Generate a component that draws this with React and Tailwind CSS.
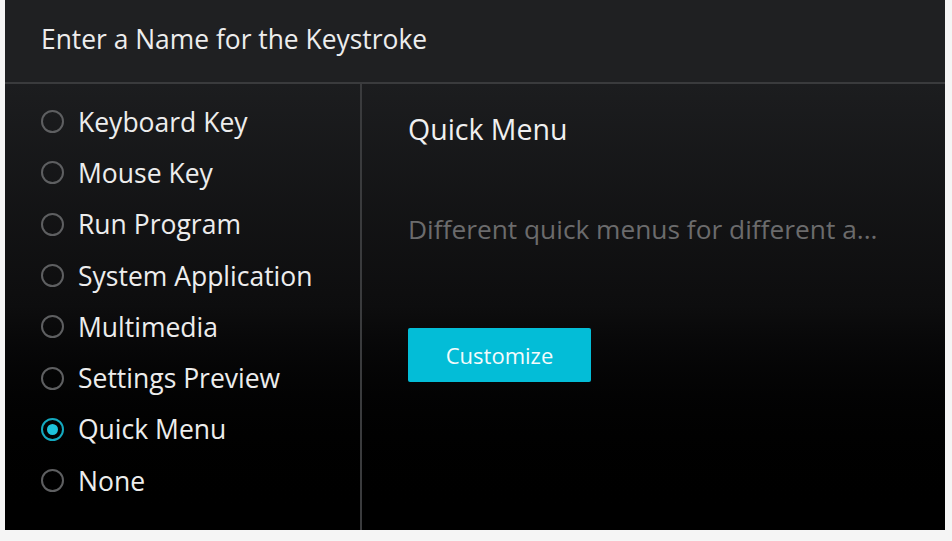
const options = [
  "Keyboard Key",
  "Mouse Key",
  "Run Program",
  "System Application",
  "Multimedia",
  "Settings Preview",
  "Quick Menu",
  "None",
];

function Radio({ checked }) {
  if (checked) {
    return (
      <span className="flex h-[23px] w-[23px] items-center justify-center rounded-full border-2 border-[#14a9bf]">
        <span className="h-[11px] w-[11px] rounded-full bg-[#1ec3dc]" />
      </span>
    );
  }
  return <span className="h-[23px] w-[23px] rounded-full border-2 border-[#5e5f61]" />;
}

export default function App() {
  return (
    <div
      className="flex h-[541px] w-[952px] bg-[#f5f5f5] pl-[5px] pr-[7px] pb-[11px]"
      style={{ fontFamily: '"Open Sans", "Noto Sans", sans-serif' }}
    >
      <div className="flex flex-1 flex-col">
        {/* header */}
        <div className="flex h-[84px] items-center border-b-2 border-[#3a3b3d] bg-[#1f2022] pb-[2px] pl-[36px]">
          <span className="text-[26.4px] text-[#ededed]">Enter a Name for the Keystroke</span>
        </div>

        {/* body */}
        <div className="flex flex-1 bg-gradient-to-b from-[#1c1d1f] via-[#0d0d0e] to-black">
          <div className="flex w-[357px] flex-col border-r-2 border-[#3a3b3d] pl-[36px] pt-[12px]">
            {options.map((o) => (
              <div key={o} className="flex h-[51.3px] items-center gap-[14px]">
                <Radio checked={o === "Quick Menu"} />
                <span className="text-[26.5px] leading-[36px] text-[#ededed]">{o}</span>
              </div>
            ))}
          </div>

          <div className="flex flex-1 flex-col pl-[46px] pt-[27px]">
            <div className="h-[36px] text-[28.5px] leading-[36px] text-[#f0f0f0]">Quick Menu</div>
            <div className="mt-[64px] h-[36px] text-[26.3px] leading-[36px] text-[#6b6b6c]">
              Different quick menus for different a...
            </div>
            <button className="mt-[81px] flex h-[54px] w-[183px] items-center justify-center rounded-[2px] bg-[#03bdd7] text-[22px] text-[#f4fbfc]">
              Customize
            </button>
          </div>
        </div>
      </div>
    </div>
  );
}
